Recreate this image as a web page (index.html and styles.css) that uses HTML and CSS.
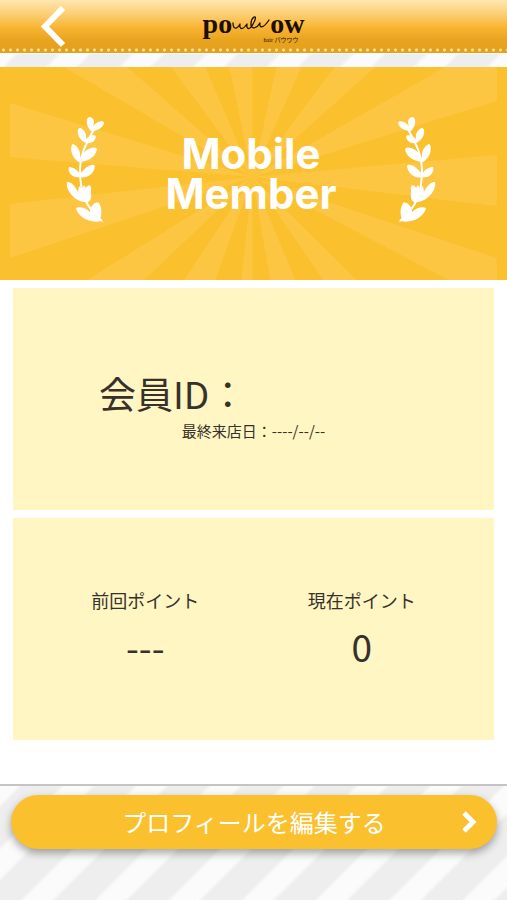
FILE: index.html
```html
<!DOCTYPE html>
<html lang="ja">
<head>
<meta charset="UTF-8">
<meta name="viewport" content="width=device-width, initial-scale=1.0">
<title>Mobile Member</title>
<link rel="stylesheet" href="styles.css">
</head>
<body>
    <header class="header">
        <a class="back" href="#" aria-label="戻る">
            <svg width="26" height="42" viewBox="0 0 26 42" fill="none" stroke="#fff" stroke-width="6">
                <path d="M23 2 L5 20.500 L23 39"/>
            </svg>
        </a>
        <div class="logo">
            <span class="logo-text">po</span>
            <svg class="logo-wave" width="38" height="16" viewBox="0 0 38 16" fill="none" stroke="#1a0f00" stroke-width="1.300" stroke-linecap="round" stroke-linejoin="round">
                <path d="M1 7 C1 12 4 15 8 8 C7 14 11 14 15 8 C14 14 18 14 21 8 C24 3 24 0 22 1 C19 3 17 12 22 12 C25 11 27 9 28 7 C27 12 31 13 37 4"/>
            </svg>
            <span class="logo-text">ow</span>
            <span class="logo-sub">hair パウワウ</span>
        </div>
    </header>

    <main class="main">
        <section class="banner">
            <svg class="rays" viewBox="0 0 486 213" preserveAspectRatio="none" fill="#fcc642">
                <path d="M242 110 L0 36 V90 Z M242 110 L0 137 V191 Z"/>
                <path d="M242 110 L54 0 H117 Z M242 110 L161 0 H195 Z M242 110 L219 0 H242 Z M242 110 L266 0 H291 Z M242 110 L324 0 H365 Z M242 110 L435 0 H486 V34 Z"/>
                <path d="M242 110 L486 88 V139 Z M242 110 L486 191 V213 H438 Z"/>
                <path d="M242 110 L77 213 H134 Z M242 110 L174 213 H205 Z M242 110 L231 213 H242 Z M242 110 L260 213 H285 Z M242 110 L313 213 H346 Z"/>
            </svg>
            <svg class="laurel" viewBox="0 0 38 106" fill="#fff">
                <path d="M28 12 C22 24 14 36 14 52 C14 78 20 90 36 104" fill="none" stroke="#fff" stroke-width="2"/>
                <path d="M25 14 C19 8 20 0 24 0 C28 1 29 5 27 9 C31 4 38 3 38 6 C37 11 31 14 25 14 Z"/>
                <path d="M18 25 C10 20 11 11 14 11 C18 12 21 17 20 22 C23 18 30 17 30 20 C29 25 23 28 18 25 Z"/>
                <path d="M13 45 C4 40 4 28 7 27 C12 29 15 35 14 41 C18 32 29 28 31 32 C30 40 21 45 13 45 Z"/>
                <path d="M14 60 C6 62 1 54 3 50 C8 50 13 54 14 58 C17 51 27 45 29 49 C28 57 21 62 14 60 Z"/>
                <path d="M22 85 C12 87 -1 75 1 65 C5 64 10 70 12 75 L13 69 L16 72 L18 68 L20 71 C22 67 26 67 25 73 C25 79 26 83 22 85 Z"/>
                <path d="M35 104 C24 107 11 99 10 91 C14 89 20 91 24 95 C24 90 29 84 33 86 C36 91 36 98 34 102 L38 106 Z"/>
            </svg>
            <h1 class="banner-title">Mobile<br>Member</h1>
            <svg class="laurel laurel-right" viewBox="0 0 38 106" fill="#fff">
                <path d="M28 12 C22 24 14 36 14 52 C14 78 20 90 36 104" fill="none" stroke="#fff" stroke-width="2"/>
                <path d="M25 14 C19 8 20 0 24 0 C28 1 29 5 27 9 C31 4 38 3 38 6 C37 11 31 14 25 14 Z"/>
                <path d="M18 25 C10 20 11 11 14 11 C18 12 21 17 20 22 C23 18 30 17 30 20 C29 25 23 28 18 25 Z"/>
                <path d="M13 45 C4 40 4 28 7 27 C12 29 15 35 14 41 C18 32 29 28 31 32 C30 40 21 45 13 45 Z"/>
                <path d="M14 60 C6 62 1 54 3 50 C8 50 13 54 14 58 C17 51 27 45 29 49 C28 57 21 62 14 60 Z"/>
                <path d="M22 85 C12 87 -1 75 1 65 C5 64 10 70 12 75 L13 69 L16 72 L18 68 L20 71 C22 67 26 67 25 73 C25 79 26 83 22 85 Z"/>
                <path d="M35 104 C24 107 11 99 10 91 C14 89 20 91 24 95 C24 90 29 84 33 86 C36 91 36 98 34 102 L38 106 Z"/>
            </svg>
        </section>

        <section class="card member">
            <p class="member-id">会員ID：</p>
            <p class="last-visit">最終来店日：----/--/--</p>
        </section>

        <section class="card points">
            <div class="point">
                <h2 class="point-label">前回ポイント</h2>
                <p class="point-value">---</p>
            </div>
            <div class="point">
                <h2 class="point-label">現在ポイント</h2>
                <p class="point-value">0</p>
            </div>
        </section>
    </main>

    <footer class="footer">
        <button class="edit-button" type="button">
            <span class="edit-label">プロフィールを編集する</span>
            <svg width="16" height="24" viewBox="0 0 16 24" fill="none" stroke="#fff" stroke-width="5">
                <path d="M3 3 L12 12 L3 21"/>
            </svg>
        </button>
    </footer>
</body>
</html>
```
FILE: styles.css
```css
* {
    box-sizing: border-box;
}

body {
    margin: 0;
    min-height: 100vh;
    font-family: "Noto Sans CJK JP", sans-serif;
    color: #37312a;
    background: repeating-linear-gradient(135deg, #eeeeee 0 26px, #fbfbfb 30px 48px, #eeeeee 52px);
}

h1, h2, p {
    margin: 0;
    font-weight: normal;
}

/* Header */
.header {
    display: grid;
    grid-template-columns: 1fr auto 1fr;
    align-items: center;
    height: 54px;
    padding: 0 40px;
    border-bottom: 1px solid #fff;
    background:
        radial-gradient(circle, #ffe08a 1px, transparent 2px) 0 48px / 7px 4px repeat-x,
        linear-gradient(#ffe6b0, #fcd079 25%, #f9b532 52%, #e9a41f 75%, #e2a01e);
}

.back {
    display: flex;
}

.logo {
    position: relative;
    display: flex;
    align-items: center;
    padding-bottom: 6px;
    color: #1a0f00;
}

.logo-text {
    font: bold 28px/32px "Liberation Serif", serif;
}

.logo-sub {
    position: absolute;
    right: 6px;
    bottom: 2px;
    font: 6px/8px "Liberation Serif", "Noto Sans CJK JP", serif;
}

/* Banner */
.main {
    margin-top: 13px;
    padding-bottom: 44px;
    border-bottom: 2px solid #c4c4c4;
    background: #fff;
}

.banner {
    position: relative;
    display: flex;
    justify-content: space-between;
    align-items: center;
    height: 213px;
    padding: 0 14% 0 13%;
    background: #fac02e;
}

.rays {
    position: absolute;
    top: 0;
    left: 2%;
    width: 96%;
    height: 100%;
}

.laurel {
    position: relative;
    width: 38px;
    height: 106px;
    margin-bottom: 8px;
}

.laurel-right {
    transform: scaleX(-1);
}

.banner-title {
    position: relative;
    font: bold 42px/40px Inter, sans-serif;
    color: #fff;
    text-align: center;
}

/* Cards */
.card {
    min-height: 222px;
    margin: 8px 13px 0;
    background: #fff6c3;
}

.member {
    padding-top: 80px;
}

.member-id {
    padding-left: 86px;
    font-size: 37px;
    line-height: 50px;
}

.last-visit {
    font-size: 15px;
    line-height: 26px;
    text-align: center;
}

.points {
    display: grid;
    grid-template-columns: 1fr 1fr;
    padding: 69px 24px 0;
    text-align: center;
}

.point-label {
    font-size: 18px;
    line-height: 26px;
}

.point-value {
    margin-top: 8px;
    font-size: 37px;
    line-height: 50px;
}

/* Footer */
.footer {
    padding: 9px 10px 50px 11px;
}

.edit-button {
    display: grid;
    grid-template-columns: 1fr auto 1fr;
    align-items: center;
    justify-items: end;
    width: 100%;
    height: 54px;
    padding: 0 20px;
    border: none;
    border-radius: 27px;
    background: #fac02e;
    box-shadow: 0 4px 8px rgba(0, 0, 0, 0.35);
    color: #fff;
    font: 24px/32px "Noto Sans CJK JP", sans-serif;
    cursor: pointer;
}

.edit-label {
    grid-column: 2;
}
```
